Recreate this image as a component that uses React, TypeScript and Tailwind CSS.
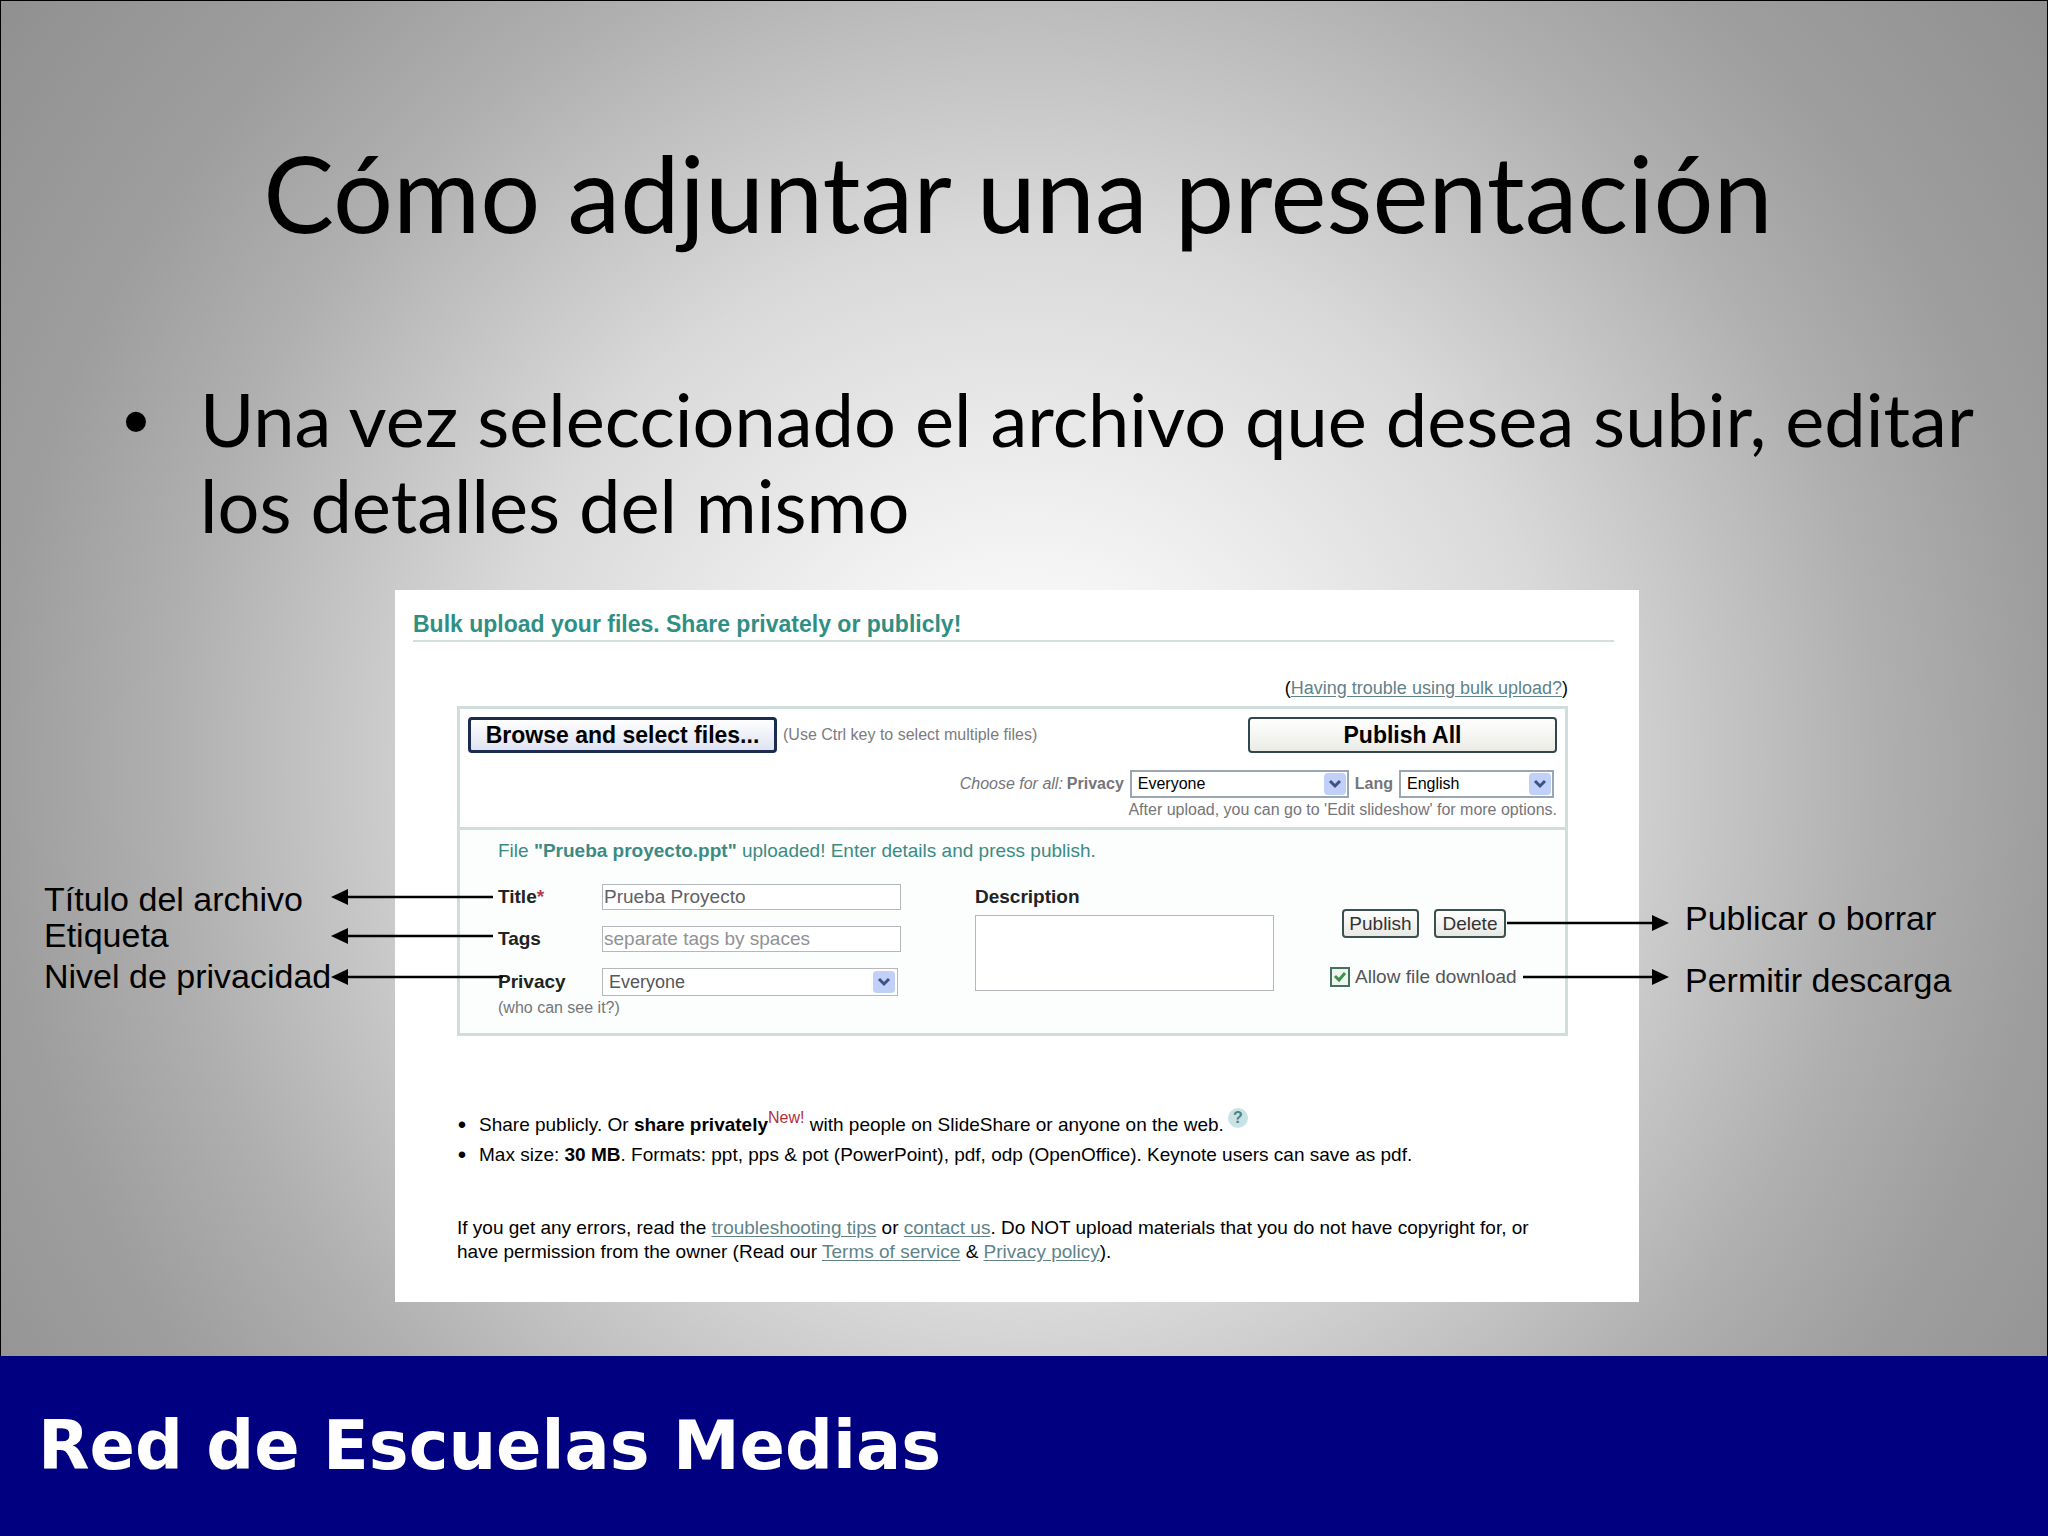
import React, { useState } from "react";

const link = "text-[#5f8388] underline underline-offset-2";

function Chevron() {
    return (
        <span className="pointer-events-none absolute inset-y-[3px] right-[3px] flex w-[22px] items-center justify-center rounded-sm bg-[#c0d0f8]">
            <svg width="14" height="10" viewBox="0 0 14 10" fill="none" stroke="#3c5282" strokeWidth="3">
                <path d="M2 2l5 5 5-5" />
            </svg>
        </span>
    );
}

function Bullet() {
    return <span className="mr-[12px] w-[10px] text-center text-[24px]">•</span>;
}

export default function App() {
    const [title, setTitle] = useState("Prueba Proyecto");
    const [tags, setTags] = useState("");
    const [allowDownload, setAllowDownload] = useState(true);

    return (
        <div className="flex min-h-screen flex-col bg-[radial-gradient(circle_farthest-corner_at_50%_50%,#ffffff_0%,#f5f5f5_15%,#d9d9d9_42%,#cacaca_51%,#bbbbbb_60%,#afafaf_67%,#9e9e9e_80%,#909090_100%)] font-['Liberation_Sans',Arial,sans-serif] text-black">
            <main className="flex-1 border-x border-t border-black">
                <h1 className="pt-[131px] pr-3 text-center font-['Lato',sans-serif] text-[106px] leading-[120px]">
                    Cómo adjuntar una presentación
                </h1>
                <ul className="mt-[124px] list-none pl-[199px] font-['Lato',sans-serif] text-[74px] leading-[86px]">
                    <li className="whitespace-nowrap">
                        <span className="-ml-[77px] inline-block w-[77px] font-['Liberation_Sans',Arial,sans-serif] leading-none">•</span>
                        Una vez seleccionado el archivo que desea subir, editar
                        <br />
                        los detalles del mismo
                    </li>
                </ul>

                <div className="mt-[42px] grid grid-cols-[394fr_1244fr_408fr]">
                    <aside className="relative z-10 pt-[291px] pl-[43px] text-[34px] leading-9 whitespace-nowrap">
                        <p>Título del archivo</p>
                        <p>Etiqueta</p>
                        <p className="mt-[5px]">Nivel de privacidad</p>
                        <svg className="absolute top-[290px] left-full -ml-16" width="172" height="120" viewBox="0 0 172 120">
                            <path d="M14 17h148M14 56h148M14 97h158" stroke="#000" strokeWidth="2.5" />
                            <path d="M0 17l17-8v16zM0 56l17-8v16zM0 97l17-8v16z" />
                        </svg>
                    </aside>

                    <section className="bg-white pb-[38px] text-[19px] leading-6">
                        <h2 className="mr-[25px] ml-[18px] border-b-2 border-[#d5dddd] pt-[18px] text-[23px] leading-8 font-bold text-[#2f8f84]">
                            Bulk upload your files. Share privately or publicly!
                        </h2>
                        <div className="pr-[71px] pl-[62px]">
                            <p className="mt-[34px] text-right text-lg leading-6">
                                (<a href="#help" className={link}>Having trouble using bulk upload?</a>)
                            </p>

                            <div className="mt-[6px] border-[3px] border-[#d0dedb]">
                                <div className="px-2 pt-2 pb-[5px]">
                                    <div className="flex items-center">
                                        <button className="h-9 w-[309px] rounded border-[3px] border-[#1c2b50] bg-gradient-to-b from-white to-[#dfe3f2] text-[23px] leading-6 font-bold">
                                            Browse and select files...
                                        </button>
                                        <span className="ml-[6px] text-base text-[#7b7b80]">(Use Ctrl key to select multiple files)</span>
                                        <button className="ml-auto h-9 w-[309px] rounded border-2 border-[#30474f] bg-gradient-to-b from-white to-[#ebebe6] text-[23px] leading-6 font-bold">
                                            Publish All
                                        </button>
                                    </div>
                                    <div className="mt-[17px] flex h-7 items-center justify-end pr-[3px] text-base text-[#75757a]">
                                        <span className="mr-1 italic">Choose for all:</span>
                                        <label htmlFor="all-privacy" className="mr-[6px] font-bold">Privacy</label>
                                        <span className="relative">
                                            <select id="all-privacy" className="block h-7 w-[219px] appearance-none border-2 border-[#9aa6b2] bg-white pl-[6px] text-black">
                                                <option>Everyone</option>
                                            </select>
                                            <Chevron />
                                        </span>
                                        <label htmlFor="all-lang" className="mx-[6px] font-bold">Lang</label>
                                        <span className="relative">
                                            <select id="all-lang" className="block h-7 w-[155px] appearance-none border-2 border-[#9aa6b2] bg-white pl-[6px] text-black">
                                                <option>English</option>
                                            </select>
                                            <Chevron />
                                        </span>
                                    </div>
                                    <p className="text-right text-base leading-6 text-[#75757a]">
                                        After upload, you can go to 'Edit slideshow' for more options.
                                    </p>
                                </div>

                                <div className="border-t-[3px] border-[#d0dedb] bg-[#fbfefd] pt-[9px] pb-[15px] pl-[38px]">
                                    <p className="text-[#3c8a82]">
                                        File <b>"Prueba proyecto.ppt"</b> uploaded! Enter details and press publish.
                                    </p>
                                    <div className="mt-[21px] flex items-start">
                                        <div className="grid grid-cols-[104px_299px] items-center gap-y-4">
                                            <label htmlFor="title" className="font-bold text-[#222]">
                                                Title<span className="text-[#b04050]">*</span>
                                            </label>
                                            <input
                                                id="title"
                                                type="text"
                                                value={title}
                                                onChange={(e) => setTitle(e.target.value)}
                                                className="h-[26px] w-full border border-[#b4b8bc] bg-white pl-px text-[#606065]"
                                            />
                                            <label htmlFor="tags" className="font-bold text-[#222]">Tags</label>
                                            <input
                                                id="tags"
                                                type="text"
                                                value={tags}
                                                onChange={(e) => setTags(e.target.value)}
                                                placeholder="separate tags by spaces"
                                                className="h-[26px] w-full border border-[#b4b8bc] bg-white pl-px placeholder:text-[#919196]"
                                            />
                                            <label htmlFor="privacy" className="font-bold text-[#222]">Privacy</label>
                                            <span className="relative w-[296px]">
                                                <select id="privacy" className="block h-7 w-full appearance-none border border-[#b4b8bc] bg-white pl-[6px] text-lg leading-6 text-[#55555a]">
                                                    <option>Everyone</option>
                                                </select>
                                                <Chevron />
                                            </span>
                                            <span className="col-span-2 -mt-[14px] text-base leading-5 text-[#75757a]">(who can see it?)</span>
                                        </div>
                                        <div className="ml-[74px]">
                                            <label htmlFor="description" className="block leading-[26px] font-bold text-[#222]">Description</label>
                                            <textarea id="description" className="mt-[5px] block h-[76px] w-[299px] resize-none border border-[#b4b8bc] bg-white" />
                                        </div>
                                        <div className="ml-14 pt-[25px] text-[#333]">
                                            <div className="flex gap-[15px] pl-3">
                                                <button className="h-[29px] w-[77px] rounded border-2 border-[#3d5050] bg-gradient-to-b from-white to-[#e8e8e4] leading-5">
                                                    Publish
                                                </button>
                                                <button className="h-[29px] w-[72px] rounded border-2 border-[#3d5050] bg-gradient-to-b from-white to-[#e8e8e4] leading-5">
                                                    Delete
                                                </button>
                                            </div>
                                            <label className="mt-[27px] flex items-center gap-[5px] text-[#55555a]">
                                                <span className="relative h-5 w-5">
                                                    <input
                                                        type="checkbox"
                                                        checked={allowDownload}
                                                        onChange={(e) => setAllowDownload(e.target.checked)}
                                                        className="peer block h-5 w-5 appearance-none border-2 border-[#46705f] bg-[#eef5ef]"
                                                    />
                                                    <svg className="pointer-events-none absolute inset-0 hidden peer-checked:block" width="20" height="20" viewBox="0 0 20 20" fill="none" stroke="#3f9050" strokeWidth="3">
                                                        <path d="M5 9l4 4 6-7" />
                                                    </svg>
                                                </span>
                                                Allow file download
                                            </label>
                                        </div>
                                    </div>
                                </div>
                            </div>

                            <ul className="mt-[74px] leading-[30px]">
                                <li className="flex">
                                    <Bullet />
                                    <span>
                                        Share publicly. Or <b>share privately</b>
                                        <sup className="text-base leading-none text-[#b03040]">New!</sup> with people on SlideShare or anyone on the web.
                                        <sup className="ml-1 inline-block h-5 w-5 rounded-full bg-[#c9e2e4] text-center text-base leading-5 font-bold text-[#4d7f88]">?</sup>
                                    </span>
                                </li>
                                <li className="flex">
                                    <Bullet />
                                    <span>
                                        Max size: <b>30 MB</b>. Formats: ppt, pps &amp; pot (PowerPoint), pdf, odp (OpenOffice). Keynote users can save as pdf.
                                    </span>
                                </li>
                            </ul>

                            <p className="mt-[46px]">
                                If you get any errors, read the <a href="#tips" className={link}>troubleshooting tips</a> or{" "}
                                <a href="#contact" className={link}>contact us</a>. Do NOT upload materials that you do not have copyright for, or
                                <br />
                                have permission from the owner (Read our <a href="#terms" className={link}>Terms of service</a> &amp;{" "}
                                <a href="#privacy-policy" className={link}>Privacy policy</a>).
                            </p>
                        </div>
                    </section>

                    <aside className="relative z-10 pt-[310px] pl-[46px] text-[34px] leading-9 whitespace-nowrap">
                        <p>Publicar o borrar</p>
                        <p className="mt-[26px]">Permitir descarga</p>
                        <svg className="absolute top-[310px] right-full -mr-[30px]" width="162" height="90" viewBox="0 0 162 90">
                            <path d="M0 23h148M16 77h132" stroke="#000" strokeWidth="2.5" />
                            <path d="M162 23l-17-8v16zM162 77l-17-8v16z" />
                        </svg>
                    </aside>
                </div>
            </main>

            <footer className="flex h-[180px] items-center bg-[#000080] pl-[38px] font-['DejaVu_Sans',sans-serif] text-[67px] font-bold text-white">
                Red de Escuelas Medias
            </footer>
        </div>
    );
}
